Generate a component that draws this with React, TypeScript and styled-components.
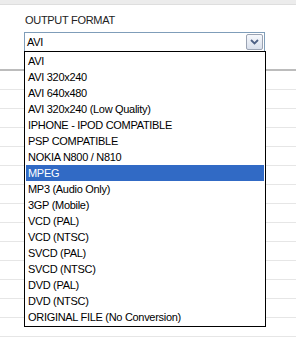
import React from 'react';
import styled, { createGlobalStyle } from 'styled-components';

const GlobalStyle = createGlobalStyle`
  html, body {
    margin: 0;
    padding: 0;
    background: #ffffff;
    font-family: "Liberation Sans", Arial, sans-serif;
  }
`;

const formats = [
  'AVI',
  'AVI 320x240',
  'AVI 640x480',
  'AVI 320x240 (Low Quality)',
  'IPHONE - IPOD COMPATIBLE',
  'PSP COMPATIBLE',
  'NOKIA N800 / N810',
  'MPEG',
  'MP3 (Audio Only)',
  '3GP (Mobile)',
  'VCD (PAL)',
  'VCD (NTSC)',
  'SVCD (PAL)',
  'SVCD (NTSC)',
  'DVD (PAL)',
  'DVD (NTSC)',
  'ORIGINAL FILE (No Conversion)',
];

const Page = styled.div`
  position: relative;
  width: 296px;
  height: 348px;
  overflow: hidden;
  background: #fff;
`;

const TopBand = styled.div`
  height: 4px;
  background: #ececec;
  border-bottom: 1px solid #dedede;
`;

const Form = styled.div`
  height: 64px;
  box-sizing: border-box;
  padding: 9px 0 0 24px;
`;

const Label = styled.div`
  font-size: 11px;
  line-height: 13px;
  letter-spacing: -0.3px;
  color: #222;
  padding-left: 1px;
  margin-bottom: 5px;
`;

const Select = styled.div`
  width: 241px;
  height: 20px;
  box-sizing: border-box;
  border: 1px solid #7f9db9;
  display: flex;
  align-items: center;
  justify-content: space-between;
  padding: 0 1px 0 2px;
  font-size: 11px;
  letter-spacing: -0.3px;
  color: #000;
`;

const ArrowButton = styled.div`
  width: 17px;
  height: 16px;
  box-sizing: border-box;
  border: 1px solid #9aa3b3;
  border-radius: 2px;
  background: linear-gradient(#f6f8fc, #d9e0ec);
  display: flex;
  align-items: center;
  justify-content: center;
`;

const Rows = styled.div`
  border-top: 2px solid #bcbcbc;
`;

const Row = styled.div`
  height: 18px;
  border-bottom: 1px solid #e6e6e6;
`;

const List = styled.div`
  position: absolute;
  top: 51px;
  left: 24px;
  width: 242px;
  box-sizing: border-box;
  border: 1px solid #000;
  background: #fff;
  padding: 1px 1px 1px 1px;
`;

const Item = styled.div<{ $active?: boolean }>`
  height: 16px;
  line-height: 16px;
  padding-left: 2px;
  font-size: 11px;
  letter-spacing: -0.3px;
  white-space: nowrap;
  color: ${(p) => (p.$active ? '#fff' : '#000')};
  background: ${(p) => (p.$active ? '#316ac5' : 'transparent')};
`;

export default function App() {
  return (
    <Page>
      <GlobalStyle />
      <TopBand />
      <Form>
        <Label>OUTPUT FORMAT</Label>
        <Select>
          <span>AVI</span>
          <ArrowButton>
            <svg width="9" height="6" viewBox="0 0 9 6">
              <path d="M1 1 L4.5 4.5 L8 1" fill="none" stroke="#4d6185" strokeWidth="1.8" />
            </svg>
          </ArrowButton>
        </Select>
      </Form>
      <Rows>
        {Array.from({ length: 15 }).map((_, i) => (
          <Row key={i} />
        ))}
      </Rows>
      <List>
        {formats.map((f) => (
          <Item key={f} $active={f === 'MPEG'}>
            {f}
          </Item>
        ))}
      </List>
    </Page>
  );
}
